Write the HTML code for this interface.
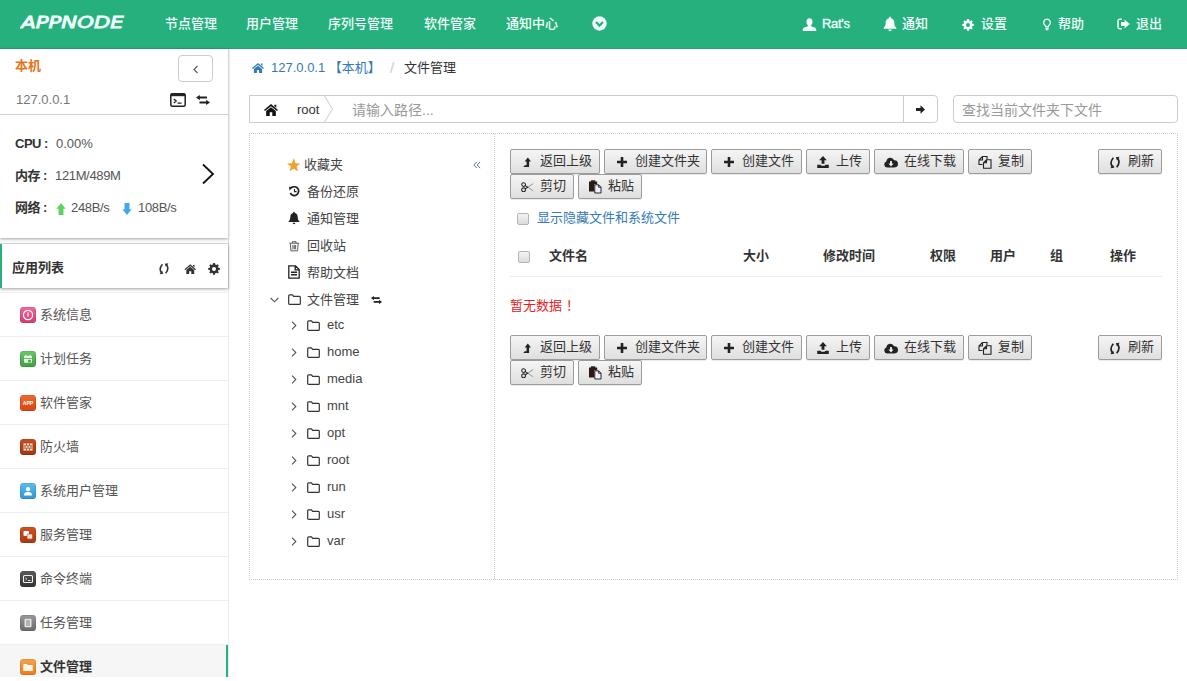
<!DOCTYPE html>
<html lang="zh-CN">
<head>
<meta charset="utf-8">
<title>AppNode - 文件管理</title>
<style>
*{box-sizing:border-box;margin:0;padding:0}
html,body{width:1187px;height:681px;overflow:hidden;background:#fff}
body{font-family:"Liberation Sans","Noto Sans CJK SC",sans-serif;font-size:13px;color:#333;position:relative}
a{text-decoration:none;color:inherit}
svg{display:block}
.abs{position:absolute}
/* header */
#hd{position:absolute;left:0;top:0;width:1187px;height:49px;background:#26b07d;border-bottom:1px solid #2f9c76}
#hd .logo{position:absolute;left:20px;top:15px}
#hd .nav{position:absolute;top:0;height:49px;line-height:48px;color:#f0fff9;font-size:13px;font-weight:500;white-space:nowrap}
#hd .ic{position:absolute}
/* sidebar */
#sb{position:absolute;left:0;top:49px;width:229px;height:632px;border-right:1px solid #ebebeb;background:#fff}
.t{position:absolute;white-space:nowrap;line-height:20px}
.b{font-weight:bold}
/* app list */
.app{position:absolute;left:0;width:228px;height:44px;border-bottom:1px solid #eee;background:#fff}
.app .i{position:absolute;left:20px;top:14px;width:16px;height:16px;border-radius:3.5px;box-shadow:inset 0 0 0 .5px rgba(0,0,0,.18)}
.app .n{position:absolute;left:40px;top:12px;line-height:20px;font-size:13px;color:#555;white-space:nowrap}
/* main */
.btn{position:absolute;height:24px;border:1px solid #9c9c9c;border-radius:2px;background:linear-gradient(#f5f5f5,#dfdfdf);box-shadow:0 1px 0 rgba(0,0,0,.08);font-size:13px;color:#333;line-height:22px;white-space:nowrap}
.btn .x{position:absolute;top:0}
.btn svg{position:absolute}
.tr{position:absolute;white-space:nowrap;line-height:20px;font-size:13px;color:#444}
.cb{position:absolute;width:12px;height:12px;border:1px solid #b4b4b4;border-radius:2px;background:linear-gradient(#f4f4f4,#dcdcdc)}
</style>
</head>
<body>
<div id="hd">
<svg class="logo" width="110" height="18" viewBox="0 0 110 18"><text x="1.2" y="13.300" font-family="DejaVu Sans, Liberation Sans, sans-serif" font-weight="normal" font-style="italic" font-size="16" fill="#f2fffa" stroke="#f2fffa" stroke-width=".8" stroke-linejoin="miter" textLength="102.500" lengthAdjust="spacingAndGlyphs">APPNODE</text></svg>
<div class="nav" style="left:165px">节点管理</div>
<div class="nav" style="left:246px">用户管理</div>
<div class="nav" style="left:328px">序列号管理</div>
<div class="nav" style="left:424px">软件管家</div>
<div class="nav" style="left:506px">通知中心</div>
<svg class="ic" style="left:592px;top:16px" width="15" height="15" viewBox="0 0 15 15"><circle cx="7.5" cy="7.5" r="7.2" fill="#f4fffb"/><path d="M4 6l3.5 3.6L11 6" fill="none" stroke="#25b17d" stroke-width="2.2"/></svg>
<svg class="ic" style="left:802px;top:18px" width="15" height="13" viewBox="0 0 15 13"><path d="M7.5 0.3c2 0 3 1.5 3 3.4 0 1.6-.7 3-1.4 3.6v1c1.600.5 4.300 1.100 4.900 2.500.2.500.3 1.200.3 2.200H.7c0-1 .1-1.700.3-2.200C1.600 9.400 4.300 8.800 5.900 8.300v-1C5.200 6.700 4.500 5.300 4.500 3.700c0-1.900 1-3.400 3-3.400z" fill="#f4fffb"/></svg>
<div class="nav" style="left:822px;letter-spacing:-.3px;-webkit-text-stroke:.35px #f0fff9">Rat's</div>
<svg class="ic" style="left:883px;top:16px" width="14" height="16" viewBox="0 0 14 16"><path d="M7 .8c.6 0 1 .4 1 1v.4c2 .5 3.300 2.200 3.300 4.300 0 2.600.6 4 2 5.300v.9H.7v-.9c1.400-1.300 2-2.700 2-5.300 0-2.100 1.300-3.800 3.300-4.300v-.4c0-.6.4-1 1-1zM5.400 13.600h3.200c0 .9-.7 1.600-1.600 1.600s-1.600-.7-1.600-1.600z" fill="#f4fffb"/></svg>
<div class="nav" style="left:902px">通知</div>
<svg class="ic" style="left:961.500px;top:18.500px" width="12" height="12" viewBox="0 0 13 13"><path d="M6.500 0l1 .1.400 1.600 1.100.5 1.400-.9 1.300 1.300-.9 1.400.5 1.100 1.600.4v1.800l-1.600.4-.5 1.100.9 1.400-1.300 1.300-1.400-.9-1.100.5-.4 1.600H5.600l-.4-1.600-1.100-.5-1.400.9-1.300-1.300.9-1.400-.5-1.100L.2 7.300V5.500l1.600-.4.500-1.100-.9-1.400 1.300-1.300 1.400.9 1.100-.5L5.600.1zm0 4.300a2.200 2.200 0 100 4.400 2.200 2.200 0 000-4.400z" fill="#f4fffb"/></svg>
<div class="nav" style="left:981px">设置</div>
<svg class="ic" style="left:1041.500px;top:17.500px" width="10" height="13" viewBox="0 0 11 14"><path d="M5.500 1.200a3.600 3.600 0 00-2.200 6.500c.5.500.7 1 .7 1.700h3c0-.7.200-1.200.7-1.700A3.600 3.600 0 005.500 1.200z" fill="none" stroke="#f4fffb" stroke-width="1.400"/><path d="M3.800 10.300h3.400v2.200c0 .5-.4.900-.9.900H4.700c-.5 0-.9-.4-.9-.9z" fill="#f4fffb"/></svg>
<div class="nav" style="left:1058px">帮助</div>
<svg class="ic" style="left:1117px;top:18px" width="13" height="12" viewBox="0 0 13 12"><path d="M4.800 1.200H2.700c-1 0-1.700.7-1.700 1.700v6.200c0 1 .7 1.700 1.700 1.700h2.100" fill="none" stroke="#f4fffb" stroke-width="1.500"/><path d="M7.600 1.500l5 4.500-5 4.500V8H4V4h3.600z" fill="#f4fffb"/></svg>
<div class="nav" style="left:1136px">退出</div>
</div>
<div id="sb">
<div class="abs" style="left:0;top:0;width:228px;height:189px;background:#fff;box-shadow:0 1px 3px rgba(0,0,0,.38)"></div>
<div class="abs" style="left:0;top:65px;width:228px;height:1px;background:#d0d0d0"></div>
<div class="abs" style="left:228px;top:0;width:1px;height:240px;background:#d4d4d4"></div>
<div class="t b" style="left:15px;top:7px;color:#e8731a">本机</div>
<div class="abs" style="left:178px;top:6px;width:35px;height:27px;border:1px solid #ccc;border-radius:4px;background:#fff"><svg width="33" height="25" viewBox="0 0 33 25"><path d="M18.500 10l-3.500 3.500 3.500 3.500" fill="none" stroke="#555" stroke-width="1.100"/></svg></div>
<div class="t" style="left:16px;top:41px;color:#777">127.0.0.1</div>
<svg class="abs" style="left:170px;top:44px" width="16" height="14" viewBox="0 0 16 14"><rect x=".8" y=".8" width="14.400" height="12.400" rx="1.500" fill="none" stroke="#222" stroke-width="1.500"/><rect x=".8" y=".8" width="14.400" height="2.400" fill="#222"/><path d="M3.800 6l2.400 2-2.400 2M7.500 10.200h4" fill="none" stroke="#222" stroke-width="1.300"/></svg>
<svg class="abs" style="left:196px;top:46px" width="14" height="10" viewBox="0 0 14 10"><path d="M3 2.600h8M3.500 7.400h7.500" stroke="#222" stroke-width="2"/><path d="M3.800 0v5.200L0 2.600zM10.200 4.800v5.200l3.800-2.600z" fill="#222"/></svg>
<div class="t b" style="left:15px;top:85px;color:#333;letter-spacing:-.5px">CPU :</div><div class="t" style="left:56px;top:85px;color:#555">0.00%</div>
<div class="t b" style="left:15px;top:117px;color:#333;letter-spacing:-.5px">内存 :</div><div class="t" style="left:55px;top:117px;color:#555;letter-spacing:-.35px">121M/489M</div>
<div class="t b" style="left:15px;top:149px;color:#333;letter-spacing:-.5px">网络 :</div>
<svg class="abs" style="left:56px;top:154px" width="10" height="12" viewBox="0 0 10 12"><path d="M5 0l4.600 5.800H7.500V12H2.500V5.800H.4z" fill="#5fd35f"/></svg>
<div class="t" style="left:71px;top:149px;color:#555;letter-spacing:-.35px">248B/s</div>
<svg class="abs" style="left:122px;top:154px" width="10" height="12" viewBox="0 0 10 12"><path d="M5 12L.4 6.200h2.100V0h5v6.200h2.100z" fill="#45a8e6"/></svg>
<div class="t" style="left:138px;top:149px;color:#555;letter-spacing:-.35px">108B/s</div>
<svg class="abs" style="left:201px;top:114px" width="14" height="22" viewBox="0 0 14 22"><path d="M2 1.500L12 11 2 20.500" fill="none" stroke="#111" stroke-width="1.800"/></svg>
<div class="abs" style="left:0;top:195px;width:228px;height:44px;background:#fff;box-shadow:0 1px 3px rgba(0,0,0,.38),0 -1px 0 rgba(0,0,0,.12);border-left:2px solid #25b17d"></div>
<div class="abs" style="left:0;top:243px;width:228px;height:1px;background:#eee"></div>
<div class="t b" style="left:12px;top:209px;color:#333">应用列表</div>
<svg class="abs" style="left:158px;top:214px" width="12" height="11.500" viewBox="0 0 13 13"><path d="M4.700 1.300Q.3 6.500 3.600 11.200M8.300 11.700Q12.700 6.500 9.400 1.800" fill="none" stroke="#333" stroke-width="1.800"/><path d="M1.500 12.700l4.200-.5L4.300 8.600zM11.500.3l-4.200.5L8.700 4.400z" fill="#333"/></svg>
<svg class="abs" style="left:184px;top:214.500px" width="12.500" height="10.500" viewBox="0 0 13 12"><path d="M6.500 0.300L13 6l-.9 1L6.500 2.300.9 7 0 6zM9.600 1h1.800v2.800L9.600 2.300z" fill="#333"/><path d="M6.500 3.200l4.500 3.700V12H7.700V8.400H5.300V12H2V6.900z" fill="#333"/></svg>
<svg class="abs" style="left:208px;top:214px" width="12" height="12" viewBox="0 0 13 13"><path d="M6.500 0l1 .1.400 1.600 1.100.5 1.400-.9 1.300 1.300-.9 1.400.5 1.100 1.600.4v1.800l-1.600.4-.5 1.100.9 1.400-1.300 1.300-1.400-.9-1.100.5-.4 1.600H5.600l-.4-1.600-1.100-.5-1.400.9-1.300-1.300.9-1.400-.5-1.100L.2 7.300V5.500l1.600-.4.500-1.100-.9-1.400 1.300-1.300 1.400.9 1.100-.5L5.600.1zm0 4.300a2.200 2.200 0 100 4.400 2.200 2.200 0 000-4.400z" fill="#333"/></svg>
<div class="app" style="top:244px;"><div class="i" style="background:linear-gradient(#ee6a9a,#d83a72)"><svg width="16" height="16" viewBox="0 0 16 16"><circle cx="8" cy="8" r="4.600" fill="none" stroke="#fff" stroke-width="1.200"/><rect x="7.400" y="5.600" width="1.200" height="4" fill="#fff"/></svg></div><div class="n">系统信息</div></div>
<div class="app" style="top:288px;"><div class="i" style="background:linear-gradient(#6cc56c,#3f9f3f)"><svg width="16" height="16" viewBox="0 0 16 16"><rect x="4" y="4.800" width="8" height="7" rx="1" fill="#e8f7e8"/><rect x="5.200" y="3.800" width="1.200" height="2" fill="#e8f7e8"/><rect x="9.600" y="3.800" width="1.200" height="2" fill="#e8f7e8"/><rect x="4" y="7" width="8" height=".8" fill="#4cae4c"/><circle cx="9.500" cy="10" r="1.600" fill="#4cae4c"/></svg></div><div class="n">计划任务</div></div>
<div class="app" style="top:332px;"><div class="i" style="background:linear-gradient(#f0692f,#d9440f)"><svg width="16" height="16" viewBox="0 0 16 16"><text x="8" y="10" font-size="5" font-weight="bold" fill="#fff" text-anchor="middle" font-family="Liberation Sans, sans-serif" textLength="10.500" lengthAdjust="spacingAndGlyphs">APP</text></svg></div><div class="n">软件管家</div></div>
<div class="app" style="top:376px;"><div class="i" style="background:linear-gradient(#c4501f,#9f3710)"><svg width="16" height="16" viewBox="0 0 16 16"><rect x="3.500" y="4.500" width="9" height="7" fill="#fbe9df"/><path d="M3.500 6.800h9M3.500 9.200h9M6.500 4.500v2.300M9.500 4.500v2.300M8 6.800v2.400M5 6.800v2.400M11 6.800v2.400M6.500 9.200v2.300M9.500 9.200v2.300" stroke="#b5451b" stroke-width=".8"/></svg></div><div class="n">防火墙</div></div>
<div class="app" style="top:420px;"><div class="i" style="background:linear-gradient(#5bbcf0,#2f96d8)"><svg width="16" height="16" viewBox="0 0 16 16"><circle cx="8" cy="6.200" r="2.100" fill="#fff"/><path d="M3.800 12.500c0-2.600 1.800-3.600 4.200-3.600s4.200 1 4.200 3.600z" fill="#fff"/></svg></div><div class="n">系统用户管理</div></div>
<div class="app" style="top:464px;"><div class="i" style="background:linear-gradient(#d0521f,#a83810)"><svg width="16" height="16" viewBox="0 0 16 16"><rect x="3.500" y="4" width="5.500" height="5" rx="1" fill="#fff"/><rect x="7" y="7" width="5.500" height="5" rx="1" fill="#fde3d6" stroke="#b5451b" stroke-width=".6"/></svg></div><div class="n">服务管理</div></div>
<div class="app" style="top:508px;"><div class="i" style="background:linear-gradient(#5a5a5a,#333)"><svg width="16" height="16" viewBox="0 0 16 16"><rect x="3.500" y="4.500" width="9" height="7" rx="1" fill="none" stroke="#eee" stroke-width="1.100"/><path d="M5.500 7l1.300 1-1.300 1M8 9.500h2.500" stroke="#eee" stroke-width=".9" fill="none"/></svg></div><div class="n">命令终端</div></div>
<div class="app" style="top:552px;"><div class="i" style="background:linear-gradient(#9a9a9a,#6a6a6a)"><svg width="16" height="16" viewBox="0 0 16 16"><rect x="4.500" y="3.800" width="7" height="8.400" rx="1" fill="#e6e6e6"/><path d="M6 6h4M6 8h4M6 10h4" stroke="#777" stroke-width=".9"/></svg></div><div class="n">任务管理</div></div>
<div class="app" style="top:596px;background:#f6f6f6;border-right:2px solid #25b17d;"><div class="i" style="background:linear-gradient(#f7a24a,#ea7d1c)"><svg width="16" height="16" viewBox="0 0 16 16"><path d="M3.500 5h3.200l1 1h4.800v6H3.500z" fill="#fff"/><rect x="3.500" y="7" width="9" height="5" fill="#fff4e6"/></svg></div><div class="n" style="font-weight:bold;color:#333">文件管理</div></div>
</div>
<div id="mn">
<svg class="abs" style="left:252px;top:63px" width="12" height="10" viewBox="0 0 13 11"><path d="M6.500 0L13 5.500l-.9 1L6.500 2 .9 6.500 0 5.500zM9.600.6h1.800v2.700L9.600 1.800z" fill="#337ab7"/><path d="M6.500 2.900l4.500 3.600V11H7.700V7.600H5.300V11H2V6.500z" fill="#337ab7"/></svg>
<div class="t" style="left:271px;top:58px;color:#337ab7">127.0.0.1 【本机】</div>
<div class="t" style="left:390px;top:58px;color:#ccc;font-size:15px">/</div>
<div class="t" style="left:404px;top:58px;color:#333">文件管理</div>
<!-- path bar -->
<div class="abs" style="left:249px;top:95px;width:689px;height:28px;border:1px solid #ccc;border-radius:0 4px 4px 0;background:#fff"></div>
<div class="abs" style="left:903px;top:96px;width:1px;height:26px;background:#ccc"></div>
<svg class="abs" style="left:264px;top:104px" width="14" height="12" viewBox="0 0 13 11"><path d="M6.500 0L13 5.500l-.9 1L6.500 2 .9 6.500 0 5.500zM9.600.6h1.800v2.700L9.600 1.800z" fill="#111"/><path d="M6.500 2.900l4.500 3.600V11H7.700V7.600H5.300V11H2V6.500z" fill="#111"/></svg>
<div class="t" style="left:297px;top:100px;color:#333">root</div>
<svg class="abs" style="left:323px;top:96px" width="11" height="26" viewBox="0 0 11 26"><path d="M1.500 0l8 13-8 13" fill="none" stroke="#ccc" stroke-width="1"/></svg>
<div class="t" style="left:352px;top:100px;color:#999;font-size:14px">请输入路径...</div>
<svg class="abs" style="left:916px;top:105px" width="9" height="9" viewBox="0 0 9 9"><path d="M0 3h4.500V.3L9 4.500 4.500 8.700V6H0z" fill="#222"/></svg>
<div class="abs" style="left:953px;top:95px;width:225px;height:28px;border:1px solid #ccc;border-radius:4px;background:#fff"></div>
<div class="t" style="left:962px;top:100px;color:#999;font-size:14px">查找当前文件夹下文件</div>
<!-- panel -->
<div class="abs" style="left:249px;top:133px;width:929px;height:447px;border:1px dotted #c8c8c8"></div>
<div class="abs" style="left:494px;top:134px;width:0;height:445px;border-left:1px dotted #c8c8c8"></div>
<!-- tree -->
<svg class="abs" style="left:286.500px;top:157.500px" width="13.500" height="14" viewBox="0 0 14 14"><path d="M7 0l1.900 5.100 5.100.3-4 3.200 1.400 5L7 10.800 2.600 13.600l1.400-5-4-3.200 5.100-.3z" fill="#f0a22e"/></svg>
<div class="tr" style="left:304px;top:155px">收藏夹</div>
<svg class="abs" style="left:472.500px;top:160.500px" width="8" height="8" viewBox="0 0 9 9"><title>«</title><path d="M4.300 1L1 4.500 4.300 8M8 1L4.700 4.500 8 8" fill="none" stroke="#4f7296" stroke-width="1.100"/></svg>
<svg class="abs" style="left:289px;top:186px" width="10.500" height="10.500" viewBox="0 0 12 12"><path d="M2.300 2.500A5 5 0 111.500 8" fill="none" stroke="#222" stroke-width="2"/><path d="M0 .8l4.300.4L.6 5z" fill="#222"/><path d="M6.300 3.300v3.200h2.400" fill="none" stroke="#222" stroke-width="1.300"/></svg>
<div class="tr" style="left:307px;top:182px">备份还原</div>
<svg class="abs" style="left:288px;top:211px" width="12" height="14" viewBox="0 0 14 16"><path d="M7 .8c.6 0 1 .4 1 1v.4c2 .5 3.300 2.200 3.300 4.300 0 2.600.6 4 2 5.300v.9H.7v-.9c1.400-1.300 2-2.700 2-5.300 0-2.100 1.300-3.800 3.300-4.300v-.4c0-.6.4-1 1-1zM5.400 13.600h3.200c0 .9-.7 1.600-1.600 1.600s-1.600-.7-1.600-1.600z" fill="#222"/></svg>
<div class="tr" style="left:307px;top:209px">通知管理</div>
<svg class="abs" style="left:289px;top:241px" width="10.500" height="10.500" viewBox="0 0 10 12" preserveAspectRatio="none"><path d="M.3 2.500h9.400M3.300 2.300V.8h3.400v1.500M1.300 2.800l.5 8.400h6.400l.5-8.400M3.700 4.500v5M5 4.500v5M6.300 4.500v5" fill="none" stroke="#444" stroke-width=".9"/></svg>
<div class="tr" style="left:307px;top:236px">回收站</div>
<svg class="abs" style="left:288px;top:265px" width="12" height="14" viewBox="0 0 12 14"><path d="M.8.800h6.700l3.700 3.700v8.700H.8zM7.200.8v4h4" fill="none" stroke="#222" stroke-width="1.300"/><path d="M3 7.200h6M3 9.800h6" stroke="#222" stroke-width="1.400"/></svg>
<div class="tr" style="left:307px;top:263px">帮助文档</div>
<svg class="abs" style="left:270px;top:297px" width="9" height="6" viewBox="0 0 9 6"><path d="M.7 1l3.800 3.800L8.300 1" fill="none" stroke="#555" stroke-width="1.100"/></svg>
<svg class="abs" style="left:288px;top:294px" width="13" height="11" viewBox="0 0 13 11"><path d="M.7 1.700c0-.5.4-.9.900-.9h2.800l1.300 1.600h5.700c.5 0 .9.400.9.900v6.100c0 .5-.4.900-.9.900H1.600c-.5 0-.9-.4-.9-.9z" fill="none" stroke="#333" stroke-width="1.200"/></svg>
<div class="tr" style="left:307px;top:290px">文件管理</div>
<svg class="abs" style="left:370px;top:296px" width="13" height="8" viewBox="0 0 14 10"><path d="M3 2.600h8M3.500 7.400h7.500" stroke="#222" stroke-width="2"/><path d="M3.800 0v5.200L0 2.600zM10.200 4.800v5.200l3.800-2.600z" fill="#222"/></svg>
<svg class="abs" style="left:291px;top:321px" width="6" height="9" viewBox="0 0 6 9"><path d="M1 .7l3.800 3.800L1 8.300" fill="none" stroke="#555" stroke-width="1.100"/></svg><svg class="abs" style="left:307px;top:320px" width="13" height="11" viewBox="0 0 13 11"><path d="M.7 1.700c0-.5.4-.9.900-.9h2.800l1.300 1.600h5.700c.5 0 .9.400.9.900v6.100c0 .5-.4.900-.9.900H1.600c-.5 0-.9-.4-.9-.9z" fill="none" stroke="#333" stroke-width="1.200"/></svg><div class="tr" style="left:327px;top:315px">etc</div>
<svg class="abs" style="left:291px;top:348px" width="6" height="9" viewBox="0 0 6 9"><path d="M1 .7l3.800 3.800L1 8.300" fill="none" stroke="#555" stroke-width="1.100"/></svg><svg class="abs" style="left:307px;top:347px" width="13" height="11" viewBox="0 0 13 11"><path d="M.7 1.700c0-.5.4-.9.900-.9h2.800l1.300 1.600h5.700c.5 0 .9.400.9.900v6.100c0 .5-.4.900-.9.900H1.600c-.5 0-.9-.4-.9-.9z" fill="none" stroke="#333" stroke-width="1.200"/></svg><div class="tr" style="left:327px;top:342px">home</div>
<svg class="abs" style="left:291px;top:375px" width="6" height="9" viewBox="0 0 6 9"><path d="M1 .7l3.800 3.800L1 8.300" fill="none" stroke="#555" stroke-width="1.100"/></svg><svg class="abs" style="left:307px;top:374px" width="13" height="11" viewBox="0 0 13 11"><path d="M.7 1.700c0-.5.4-.9.900-.9h2.800l1.300 1.600h5.700c.5 0 .9.400.9.900v6.100c0 .5-.4.900-.9.900H1.600c-.5 0-.9-.4-.9-.9z" fill="none" stroke="#333" stroke-width="1.200"/></svg><div class="tr" style="left:327px;top:369px">media</div>
<svg class="abs" style="left:291px;top:402px" width="6" height="9" viewBox="0 0 6 9"><path d="M1 .7l3.800 3.800L1 8.300" fill="none" stroke="#555" stroke-width="1.100"/></svg><svg class="abs" style="left:307px;top:401px" width="13" height="11" viewBox="0 0 13 11"><path d="M.7 1.700c0-.5.4-.9.900-.9h2.800l1.300 1.600h5.700c.5 0 .9.400.9.900v6.100c0 .5-.4.900-.9.900H1.600c-.5 0-.9-.4-.9-.9z" fill="none" stroke="#333" stroke-width="1.200"/></svg><div class="tr" style="left:327px;top:396px">mnt</div>
<svg class="abs" style="left:291px;top:429px" width="6" height="9" viewBox="0 0 6 9"><path d="M1 .7l3.800 3.800L1 8.300" fill="none" stroke="#555" stroke-width="1.100"/></svg><svg class="abs" style="left:307px;top:428px" width="13" height="11" viewBox="0 0 13 11"><path d="M.7 1.700c0-.5.4-.9.900-.9h2.800l1.300 1.600h5.700c.5 0 .9.400.9.900v6.100c0 .5-.4.900-.9.900H1.600c-.5 0-.9-.4-.9-.9z" fill="none" stroke="#333" stroke-width="1.200"/></svg><div class="tr" style="left:327px;top:423px">opt</div>
<svg class="abs" style="left:291px;top:456px" width="6" height="9" viewBox="0 0 6 9"><path d="M1 .7l3.800 3.800L1 8.300" fill="none" stroke="#555" stroke-width="1.100"/></svg><svg class="abs" style="left:307px;top:455px" width="13" height="11" viewBox="0 0 13 11"><path d="M.7 1.700c0-.5.4-.9.900-.9h2.800l1.300 1.600h5.700c.5 0 .9.400.9.900v6.100c0 .5-.4.900-.9.900H1.600c-.5 0-.9-.4-.9-.9z" fill="none" stroke="#333" stroke-width="1.200"/></svg><div class="tr" style="left:327px;top:450px">root</div>
<svg class="abs" style="left:291px;top:483px" width="6" height="9" viewBox="0 0 6 9"><path d="M1 .7l3.800 3.800L1 8.300" fill="none" stroke="#555" stroke-width="1.100"/></svg><svg class="abs" style="left:307px;top:482px" width="13" height="11" viewBox="0 0 13 11"><path d="M.7 1.700c0-.5.4-.9.900-.9h2.800l1.300 1.600h5.700c.5 0 .9.400.9.900v6.100c0 .5-.4.900-.9.900H1.600c-.5 0-.9-.4-.9-.9z" fill="none" stroke="#333" stroke-width="1.200"/></svg><div class="tr" style="left:327px;top:477px">run</div>
<svg class="abs" style="left:291px;top:510px" width="6" height="9" viewBox="0 0 6 9"><path d="M1 .7l3.800 3.800L1 8.300" fill="none" stroke="#555" stroke-width="1.100"/></svg><svg class="abs" style="left:307px;top:509px" width="13" height="11" viewBox="0 0 13 11"><path d="M.7 1.700c0-.5.4-.9.900-.9h2.800l1.300 1.600h5.700c.5 0 .9.400.9.900v6.100c0 .5-.4.900-.9.900H1.600c-.5 0-.9-.4-.9-.9z" fill="none" stroke="#333" stroke-width="1.200"/></svg><div class="tr" style="left:327px;top:504px">usr</div>
<svg class="abs" style="left:291px;top:537px" width="6" height="9" viewBox="0 0 6 9"><path d="M1 .7l3.800 3.800L1 8.300" fill="none" stroke="#555" stroke-width="1.100"/></svg><svg class="abs" style="left:307px;top:536px" width="13" height="11" viewBox="0 0 13 11"><path d="M.7 1.700c0-.5.4-.9.900-.9h2.800l1.300 1.600h5.700c.5 0 .9.400.9.900v6.100c0 .5-.4.900-.9.900H1.600c-.5 0-.9-.4-.9-.9z" fill="none" stroke="#333" stroke-width="1.200"/></svg><div class="tr" style="left:327px;top:531px">var</div>

<!-- right -->
<div class="btn" style="left:510px;top:149px;height:25px;width:90px"><svg style="left:11px;top:6.500px" width="10" height="11" viewBox="0 0 12 13"><path d="M7 .5l3.800 4.800H8.500V12H1.500l1.800-2.200h2.200V5.300H3.200z" fill="#222"/></svg><span class="x" style="left:29px">返回上级</span></div>
<div class="btn" style="left:604px;top:149px;height:25px;width:103px"><svg style="left:12px;top:7px" width="10" height="10" viewBox="0 0 10 10"><path d="M3.700 0h2.600v3.700H10v2.600H6.300V10H3.700V6.300H0V3.700h3.700z" fill="#222"/></svg><span class="x" style="left:30px">创建文件夹</span></div>
<div class="btn" style="left:711px;top:149px;height:25px;width:91px"><svg style="left:12px;top:7px" width="10" height="10" viewBox="0 0 10 10"><path d="M3.700 0h2.600v3.700H10v2.600H6.300V10H3.700V6.300H0V3.700h3.700z" fill="#222"/></svg><span class="x" style="left:30px">创建文件</span></div>
<div class="btn" style="left:806px;top:149px;height:25px;width:64px"><svg style="left:10px;top:6px" width="12" height="12.500" viewBox="0 0 12 13"><path d="M6 0l4 4.500H7.500V8h-3V4.500H2zM0 9h3.500l.8 1.200h3.400L8.500 9H12v3.500H0z" fill="#222"/></svg><span class="x" style="left:29px">上传</span></div>
<div class="btn" style="left:874px;top:149px;height:25px;width:90px"><svg style="left:9px;top:5.500px" width="14" height="12" viewBox="0 0 15 13"><path d="M3.600 12.500A3.400 3.400 0 012.500 5.900 4.300 4.300 0 0110.800 4.600a3.900 3.900 0 01.600 7.900z" fill="#222"/><path d="M6.500 5.500h2v2.700h1.800L7.500 11.300 4.700 8.200h1.800z" fill="#eee"/></svg><span class="x" style="left:29px">在线下载</span></div>
<div class="btn" style="left:968px;top:149px;height:25px;width:64px"><svg style="left:9px;top:5px" width="14" height="14" viewBox="0 0 14 14"><path d="M4.500 1.500h4.500v3M4.500 1.500L1 5v4.500h3.500M1 5h3.500V1.500" fill="none" stroke="#222" stroke-width="1.100"/><path d="M8.500 4.800H13v8.400H5.500V7.800zM5.500 7.800h3V4.800" fill="none" stroke="#222" stroke-width="1.100"/></svg><span class="x" style="left:29px">复制</span></div>
<div class="btn" style="left:1098px;top:149px;height:25px;width:64px"><svg style="left:10px;top:6px" width="12" height="13" viewBox="0 0 13 13"><path d="M4.700 1.300Q.3 6.500 3.600 11.200M8.300 11.700Q12.700 6.500 9.400 1.800" fill="none" stroke="#222" stroke-width="1.800"/><path d="M1.500 12.700l4.200-.5L4.300 8.600zM11.500.3l-4.200.5L8.700 4.400z" fill="#222"/></svg><span class="x" style="left:29px">刷新</span></div>
<div class="btn" style="left:510px;top:174px;height:25px;width:64px"><svg style="left:10px;top:6.500px" width="13" height="10.400" viewBox="0 0 15 12"><circle cx="3" cy="3" r="2.200" fill="none" stroke="#222" stroke-width="1.200"/><circle cx="3" cy="9" r="2.200" fill="none" stroke="#222" stroke-width="1.200"/><path d="M4.800 4.200L8 6 4.800 7.800" fill="none" stroke="#222" stroke-width="1.200"/><path d="M14 1.800L8 6l6 4.200" fill="none" stroke="#888" stroke-width="1"/></svg><span class="x" style="left:29px">剪切</span></div>
<div class="btn" style="left:578px;top:174px;height:25px;width:64px"><svg style="left:10px;top:5px" width="12.500" height="13.500" viewBox="0 0 13 14"><path d="M0 1.500h8.500v3H5.500v7.500H0z" fill="#2a1a14"/><rect x="2" y=".3" width="4.500" height="1.800" fill="#2a1a14"/><path d="M6 5h4l2.500 2.500v6H6z" fill="#eef" stroke="#222" stroke-width="1"/><path d="M10 5v2.500h2.500" fill="none" stroke="#222" stroke-width="1"/></svg><span class="x" style="left:29px">粘贴</span></div>

<div class="cb" style="left:517px;top:213px"></div>
<div class="t" style="left:537px;top:208px;color:#337ab7">显示隐藏文件和系统文件</div>
<div class="cb" style="left:518px;top:251px"></div>
<div class="t b" style="left:549px;top:246px">文件名</div>
<div class="t b" style="left:743px;top:246px">大小</div>
<div class="t b" style="left:823px;top:246px">修改时间</div>
<div class="t b" style="left:930px;top:246px">权限</div>
<div class="t b" style="left:990px;top:246px">用户</div>
<div class="t b" style="left:1050px;top:246px">组</div>
<div class="t b" style="left:1110px;top:246px">操作</div>
<div class="abs" style="left:510px;top:276px;width:652px;height:1px;background:#ededed"></div>
<div class="t" style="left:510px;top:296px;color:#e3211c">暂无数据<span style="margin-left:4px">！</span></div>
<div class="btn" style="left:510px;top:335px;height:25px;width:90px"><svg style="left:11px;top:6.500px" width="10" height="11" viewBox="0 0 12 13"><path d="M7 .5l3.800 4.800H8.500V12H1.500l1.800-2.200h2.200V5.300H3.200z" fill="#222"/></svg><span class="x" style="left:29px">返回上级</span></div>
<div class="btn" style="left:604px;top:335px;height:25px;width:103px"><svg style="left:12px;top:7px" width="10" height="10" viewBox="0 0 10 10"><path d="M3.700 0h2.600v3.700H10v2.600H6.300V10H3.700V6.300H0V3.700h3.700z" fill="#222"/></svg><span class="x" style="left:30px">创建文件夹</span></div>
<div class="btn" style="left:711px;top:335px;height:25px;width:91px"><svg style="left:12px;top:7px" width="10" height="10" viewBox="0 0 10 10"><path d="M3.700 0h2.600v3.700H10v2.600H6.300V10H3.700V6.300H0V3.700h3.700z" fill="#222"/></svg><span class="x" style="left:30px">创建文件</span></div>
<div class="btn" style="left:806px;top:335px;height:25px;width:64px"><svg style="left:10px;top:6px" width="12" height="12.500" viewBox="0 0 12 13"><path d="M6 0l4 4.500H7.500V8h-3V4.500H2zM0 9h3.500l.8 1.200h3.400L8.500 9H12v3.500H0z" fill="#222"/></svg><span class="x" style="left:29px">上传</span></div>
<div class="btn" style="left:874px;top:335px;height:25px;width:90px"><svg style="left:9px;top:5.500px" width="14" height="12" viewBox="0 0 15 13"><path d="M3.600 12.500A3.400 3.400 0 012.500 5.900 4.300 4.300 0 0110.800 4.600a3.900 3.900 0 01.600 7.900z" fill="#222"/><path d="M6.500 5.500h2v2.700h1.800L7.500 11.300 4.700 8.200h1.800z" fill="#eee"/></svg><span class="x" style="left:29px">在线下载</span></div>
<div class="btn" style="left:968px;top:335px;height:25px;width:64px"><svg style="left:9px;top:5px" width="14" height="14" viewBox="0 0 14 14"><path d="M4.500 1.500h4.500v3M4.500 1.500L1 5v4.500h3.500M1 5h3.500V1.500" fill="none" stroke="#222" stroke-width="1.100"/><path d="M8.500 4.800H13v8.400H5.500V7.800zM5.500 7.800h3V4.800" fill="none" stroke="#222" stroke-width="1.100"/></svg><span class="x" style="left:29px">复制</span></div>
<div class="btn" style="left:1098px;top:335px;height:25px;width:64px"><svg style="left:10px;top:6px" width="12" height="13" viewBox="0 0 13 13"><path d="M4.700 1.300Q.3 6.500 3.600 11.200M8.300 11.700Q12.700 6.500 9.400 1.800" fill="none" stroke="#222" stroke-width="1.800"/><path d="M1.500 12.700l4.200-.5L4.300 8.600zM11.500.3l-4.200.5L8.700 4.400z" fill="#222"/></svg><span class="x" style="left:29px">刷新</span></div>
<div class="btn" style="left:510px;top:360px;height:25px;width:64px"><svg style="left:10px;top:6.500px" width="13" height="10.400" viewBox="0 0 15 12"><circle cx="3" cy="3" r="2.200" fill="none" stroke="#222" stroke-width="1.200"/><circle cx="3" cy="9" r="2.200" fill="none" stroke="#222" stroke-width="1.200"/><path d="M4.800 4.200L8 6 4.800 7.800" fill="none" stroke="#222" stroke-width="1.200"/><path d="M14 1.800L8 6l6 4.200" fill="none" stroke="#888" stroke-width="1"/></svg><span class="x" style="left:29px">剪切</span></div>
<div class="btn" style="left:578px;top:360px;height:25px;width:64px"><svg style="left:10px;top:5px" width="12.500" height="13.500" viewBox="0 0 13 14"><path d="M0 1.500h8.500v3H5.500v7.500H0z" fill="#2a1a14"/><rect x="2" y=".3" width="4.500" height="1.800" fill="#2a1a14"/><path d="M6 5h4l2.500 2.500v6H6z" fill="#eef" stroke="#222" stroke-width="1"/><path d="M10 5v2.500h2.500" fill="none" stroke="#222" stroke-width="1"/></svg><span class="x" style="left:29px">粘贴</span></div>

</div>
<div class="abs" style="left:0;top:677px;width:1187px;height:4px;background:#fff"></div>
</body>
</html>
